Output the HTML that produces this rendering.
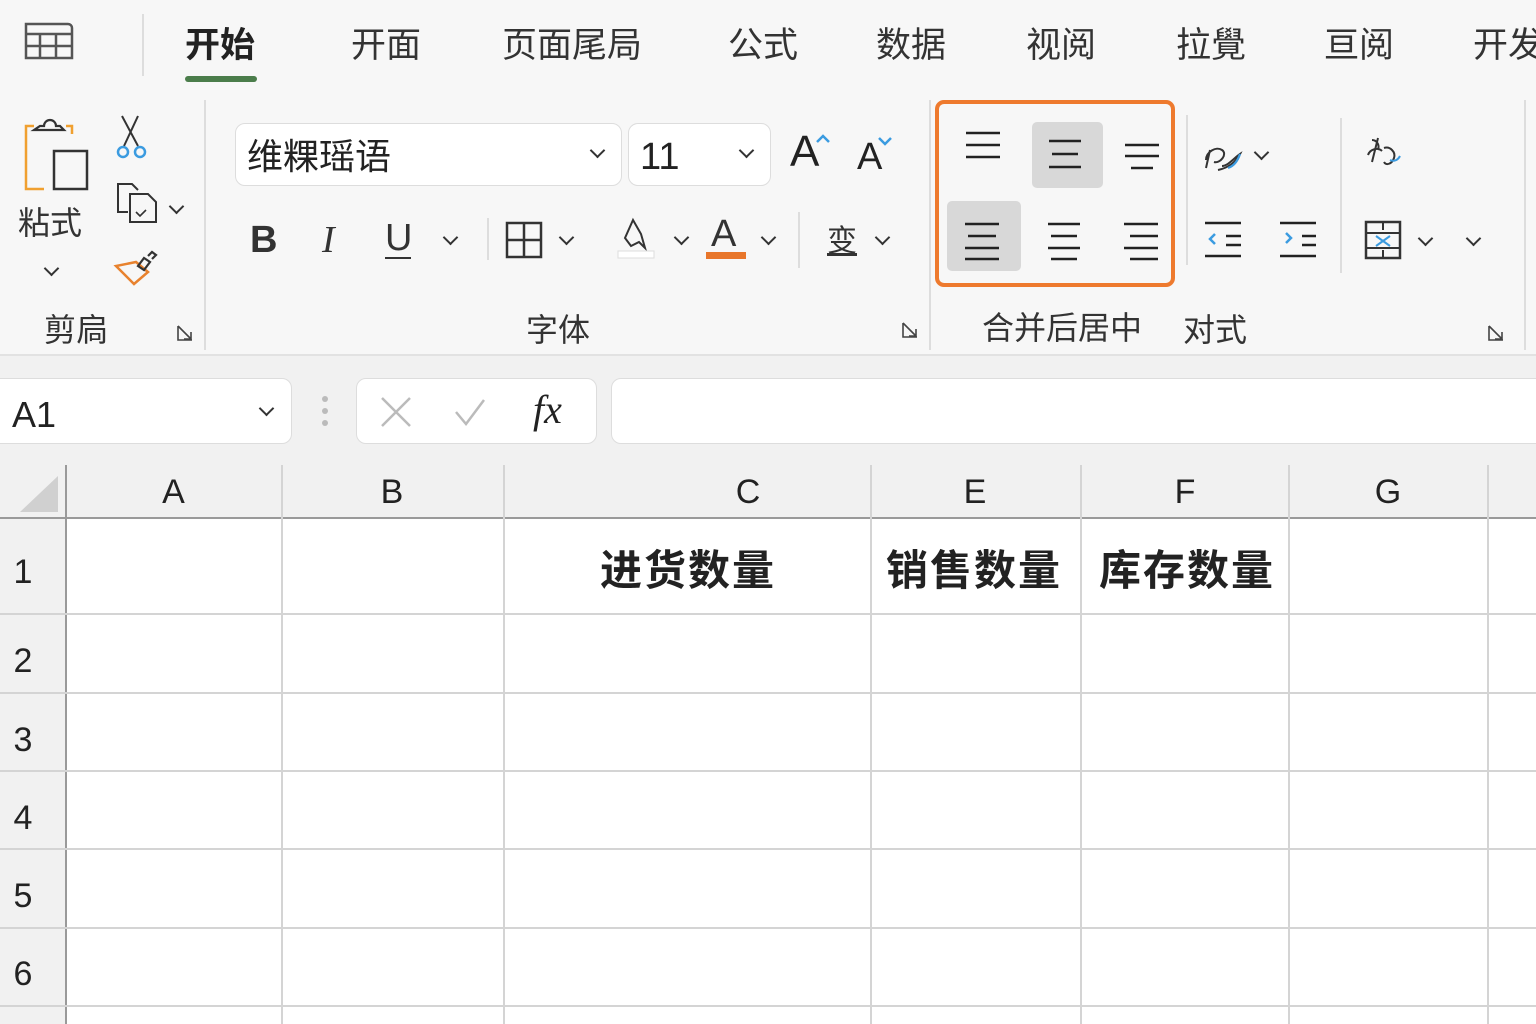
<!DOCTYPE html>
<html><head><meta charset="utf-8">
<style>
*{margin:0;padding:0;box-sizing:border-box}
body{width:1536px;height:1024px;overflow:hidden;background:#f7f7f7;position:relative;font-family:"Liberation Sans","Noto Sans CJK SC",sans-serif;color:#222}
.a{position:absolute}
.t{position:absolute;font-size:35px;line-height:40px;color:#333;white-space:nowrap}
.lbl{position:absolute;font-size:32px;line-height:36px;color:#333;white-space:nowrap}
.box{position:absolute;background:#fff;border:1.5px solid #ddd;border-radius:10px}
.chev{position:absolute;width:11px;height:11px;border-right:2px solid #333;border-bottom:2px solid #333;transform:rotate(45deg)}
.vl{position:absolute;width:1.5px;background:#ddd}
svg{position:absolute;overflow:visible}
.gh{position:absolute;font-size:34px;color:#222;text-align:center;line-height:40px}
</style></head><body>
<!-- tabs -->
<svg style="left:24px;top:20px" width="50" height="46"><path d="M2 4h42a4 4 0 0 1 4 4v30H2z" fill="none" stroke="#555" stroke-width="2.5"/><path d="M2 14h46M2 26h46M16 14v24M32 14v24" stroke="#555" stroke-width="2.5"/></svg>
<div class="vl" style="left:142px;top:14px;height:62px"></div>
<div class="t" style="left:185px;top:26px;font-weight:bold;color:#222">开始</div>
<div class="a" style="left:185px;top:76px;width:72px;height:6px;border-radius:3px;background:#4b7d4b"></div>
<div class="t" style="left:351px;top:26px">开面</div>
<div class="t" style="left:502px;top:26px">页面尾局</div>
<div class="t" style="left:728px;top:26px">公式</div>
<div class="t" style="left:876px;top:26px">数据</div>
<div class="t" style="left:1026px;top:26px">视阅</div>
<div class="t" style="left:1176px;top:26px">拉覺</div>
<div class="t" style="left:1324px;top:26px">亘阅</div>
<div class="t" style="left:1473px;top:26px">开发</div>

<!-- clipboard -->
<svg style="left:24px;top:118px" width="66" height="74"><path d="M10 8H2v63h18" fill="none" stroke="#f0a030" stroke-width="2.5"/><path d="M42 8h6v8" fill="none" stroke="#f0a030" stroke-width="2.5"/><path d="M10 12h30l-4-4h-4a6 6 0 0 0-12 0h-4z" fill="none" stroke="#333" stroke-width="2.2"/><rect x="30" y="33" width="33" height="38" fill="none" stroke="#333" stroke-width="2.5"/></svg>
<div class="lbl" style="left:18px;top:205px">粘式</div>
<div class="chev" style="left:46px;top:263px"></div>
<svg style="left:116px;top:114px" width="40" height="48"><path d="M6 2l16 30M22 2L8 32" stroke="#333" stroke-width="2"/><circle cx="7" cy="38" r="5" fill="none" stroke="#3b9be0" stroke-width="2.5"/><circle cx="24" cy="38" r="5" fill="none" stroke="#3b9be0" stroke-width="2.5"/></svg>
<svg style="left:116px;top:182px" width="40" height="44"><path d="M12 30H2V2h14l6 6" fill="none" stroke="#333" stroke-width="2"/><path d="M14 12h18l8 8v20H14z" fill="none" stroke="#333" stroke-width="2"/><path d="M20 30l4 4 6-6" fill="none" stroke="#333" stroke-width="1.6"/></svg>
<div class="chev" style="left:171px;top:201px"></div>
<svg style="left:114px;top:250px" width="44" height="38"><path d="M2 16l18 18 14-12-12-10z" fill="none" stroke="#e8822e" stroke-width="2.5"/><path d="M24 16l6-8 6 4-6 8zM34 6l4-4 4 3-4 4" fill="none" stroke="#333" stroke-width="2.2"/></svg>
<div class="lbl" style="left:44px;top:312px">剪扃</div>
<svg style="left:177px;top:325px" width="16" height="16"><path d="M1 1v14h14M1 1l13 13M14 7v7H7" fill="none" stroke="#444" stroke-width="1.6"/></svg>
<div class="vl" style="left:204px;top:100px;height:250px"></div>

<!-- font group -->
<div class="box" style="left:235px;top:123px;width:387px;height:63px"></div>
<div class="t" style="left:247px;top:137px;font-size:36px;color:#222">维粿瑶语</div>
<div class="chev" style="left:592px;top:145px"></div>
<div class="box" style="left:628px;top:123px;width:143px;height:63px"></div>
<div class="t" style="left:640px;top:137px;font-size:38px;color:#222">11</div>
<div class="chev" style="left:741px;top:145px"></div>
<div class="t" style="left:790px;top:132px;font-size:44px;color:#222">A</div>
<svg style="left:816px;top:134px" width="14" height="10"><path d="M1 8l6-6 6 6" fill="none" stroke="#3b9be0" stroke-width="2.5"/></svg>
<div class="t" style="left:857px;top:137px;font-size:38px;color:#222">A</div>
<svg style="left:878px;top:136px" width="14" height="10"><path d="M1 2l6 6 6-6" fill="none" stroke="#3b9be0" stroke-width="2.5"/></svg>

<div class="t" style="left:250px;top:220px;font-size:38px;font-weight:bold;color:#333">B</div>
<div class="t" style="left:322px;top:220px;font-size:38px;font-style:italic;font-family:'Liberation Serif',serif;color:#333">I</div>
<div class="t" style="left:385px;top:218px;font-size:38px;color:#333">U</div>
<div class="a" style="left:385px;top:257px;width:26px;height:2px;background:#333"></div>
<div class="chev" style="left:445px;top:232px"></div>
<div class="vl" style="left:487px;top:218px;height:42px"></div>
<svg style="left:506px;top:222px" width="36" height="36"><rect x="1" y="1" width="34" height="34" fill="none" stroke="#333" stroke-width="2.5"/><path d="M18 1v34M1 18h34" stroke="#333" stroke-width="2.5"/></svg>
<div class="chev" style="left:561px;top:232px"></div>
<svg style="left:617px;top:218px" width="40" height="42"><path d="M16 2l-8 18 6 8 8-4 6 6-4-14z" fill="none" stroke="#333" stroke-width="2"/><rect x="1" y="33" width="36" height="7" fill="#fff" stroke="#ddd"/></svg>
<div class="chev" style="left:676px;top:232px"></div>
<div class="t" style="left:711px;top:214px;font-size:38px;color:#333">A</div>
<div class="a" style="left:706px;top:252px;width:40px;height:7px;background:#e8762b"></div>
<div class="chev" style="left:763px;top:232px"></div>
<div class="vl" style="left:798px;top:212px;height:56px"></div>
<div class="t" style="left:827px;top:222px;font-size:30px;color:#333;text-decoration:underline">变</div>
<div class="chev" style="left:877px;top:232px"></div>
<div class="lbl" style="left:526px;top:312px">字体</div>
<svg style="left:902px;top:322px" width="16" height="16"><path d="M1 1v14h14M1 1l13 13M14 7v7H7" fill="none" stroke="#444" stroke-width="1.6"/></svg>
<div class="vl" style="left:929px;top:100px;height:250px"></div>

<!-- alignment -->
<div class="a" style="left:1032px;top:122px;width:71px;height:66px;background:#d8d8d8;border-radius:5px"></div>
<div class="a" style="left:947px;top:201px;width:74px;height:70px;background:#d8d8d8;border-radius:5px"></div>
<div class="a" style="left:935px;top:100px;width:240px;height:187px;border:4px solid #ee7a2e;border-radius:9px"></div>
<svg style="left:0;top:0" width="1536" height="400"><g stroke="#222" stroke-width="2.5">
<path d="M966 133h34M966 145h34M966 157h34"/>
<path d="M1049 141h32M1052 154h26M1049 167h32"/>
<path d="M1125 145h34M1125 156h34M1131 168h22"/>
<path d="M965 224h34M968 236h28M965 248h34M965 259h34"/>
<path d="M1048 224h32M1051 236h26M1048 248h32M1051 259h26"/>
<path d="M1124 224h34M1130 236h28M1124 248h34M1130 259h28"/>
<path d="M1205 223h36M1226 236h15M1226 245h15M1205 256h36"/>
<path d="M1280 223h36M1302 236h14M1302 245h14M1280 256h36"/>
</g>
<path d="M1215 234l-5 5 5 5" fill="none" stroke="#3b9be0" stroke-width="2.5"/>
<path d="M1286 233l5 5-5 5" fill="none" stroke="#3b9be0" stroke-width="2.5"/>
<path d="M1206 160c0-8 10-14 16-10s-2 14-8 12M1210 150l-4 18M1222 166c6 0 12-8 18-12-4 8-12 14-22 16" fill="none" stroke="#333" stroke-width="2"/>
<path d="M1228 168c6-2 10-8 12-14" fill="none" stroke="#3b9be0" stroke-width="2.2"/>
<path d="M1372 140c4 0 8 4 6 10M1368 155c2-6 10-8 14-4M1378 138l-6 24M1384 148c6-2 12 4 10 10s-8 8-10 4" fill="none" stroke="#333" stroke-width="2"/>
<path d="M1390 160c4 2 8 0 10-4" fill="none" stroke="#3b9be0" stroke-width="2"/>
<rect x="1366" y="222" width="34" height="36" fill="none" stroke="#333" stroke-width="2.5"/>
<path d="M1366 233h34M1366 248h34M1383 222v8M1383 250v8" stroke="#333" stroke-width="2"/>
<path d="M1376 236l14 10M1390 236l-14 10" stroke="#3b9be0" stroke-width="2"/>
</svg>
<div class="chev" style="left:1256px;top:147px"></div>
<div class="vl" style="left:1186px;top:115px;height:150px"></div>
<div class="vl" style="left:1340px;top:118px;height:155px"></div>
<div class="chev" style="left:1420px;top:233px"></div>
<div class="chev" style="left:1468px;top:233px"></div>
<div class="lbl" style="left:982px;top:310px">合并后居中</div>
<div class="lbl" style="left:1183px;top:312px">对式</div>
<svg style="left:1488px;top:325px" width="16" height="16"><path d="M1 1v14h14M1 1l13 13M14 7v7H7" fill="none" stroke="#444" stroke-width="1.6"/></svg>
<div class="vl" style="left:1524px;top:100px;height:250px"></div>

<!-- ribbon bottom -->
<div class="a" style="left:0;top:354px;width:1536px;height:112px;background:#f1f1f1;border-top:2px solid #e2e2e2"></div>

<!-- formula bar -->
<div class="box" style="left:-10px;top:378px;width:302px;height:66px"></div>
<div class="t" style="left:12px;top:395px;font-size:36px;color:#222">A1</div>
<div class="chev" style="left:261px;top:403px"></div>
<div class="a" style="left:322px;top:396px;width:6px;height:6px;border-radius:3px;background:#bbb"></div>
<div class="a" style="left:322px;top:408px;width:6px;height:6px;border-radius:3px;background:#bbb"></div>
<div class="a" style="left:322px;top:420px;width:6px;height:6px;border-radius:3px;background:#bbb"></div>
<div class="box" style="left:356px;top:378px;width:241px;height:66px"></div>
<svg style="left:380px;top:396px" width="120" height="32"><path d="M2 2l28 28M30 2L2 30" stroke="#bbb" stroke-width="2.5"/><path d="M76 16l10 12 18-24" fill="none" stroke="#bbb" stroke-width="2.5"/></svg>
<div class="t" style="left:533px;top:390px;font-size:40px;font-style:italic;font-family:'Liberation Serif',serif;color:#222">fx</div>
<div class="box" style="left:611px;top:378px;width:940px;height:66px"></div>

<!-- grid -->
<div class="a" style="left:0;top:465px;width:1536px;height:559px;background:#fff"></div>
<div class="a" style="left:0;top:465px;width:1536px;height:53px;background:#f1f1f1"></div>
<div class="a" style="left:0;top:465px;width:66px;height:559px;background:#f1f1f1"></div>
<svg style="left:20px;top:476px" width="40" height="38"><path d="M38 0v36H0z" fill="#d0d0d0"/></svg>
<div class="a" style="left:0;top:517px;width:1536px;height:2px;background:#9a9a9a"></div>
<div class="a" style="left:65px;top:465px;width:2px;height:559px;background:#9a9a9a"></div>
<!-- column lines -->
<div class="vl" style="left:281px;top:465px;height:559px;background:#d4d4d4"></div>
<div class="vl" style="left:503px;top:465px;height:559px;background:#d4d4d4"></div>
<div class="vl" style="left:870px;top:465px;height:559px;background:#d4d4d4"></div>
<div class="vl" style="left:1080px;top:465px;height:559px;background:#d4d4d4"></div>
<div class="vl" style="left:1288px;top:465px;height:559px;background:#d4d4d4"></div>
<div class="vl" style="left:1487px;top:465px;height:559px;background:#d4d4d4"></div>
<!-- row lines -->
<div class="a" style="left:0;top:613px;width:1536px;height:1.5px;background:#d4d4d4"></div>
<div class="a" style="left:0;top:692px;width:1536px;height:1.5px;background:#d4d4d4"></div>
<div class="a" style="left:0;top:770px;width:1536px;height:1.5px;background:#d4d4d4"></div>
<div class="a" style="left:0;top:848px;width:1536px;height:1.5px;background:#d4d4d4"></div>
<div class="a" style="left:0;top:927px;width:1536px;height:1.5px;background:#d4d4d4"></div>
<div class="a" style="left:0;top:1005px;width:1536px;height:1.5px;background:#d4d4d4"></div>
<!-- headers -->
<div class="gh" style="left:66px;top:472px;width:215px">A</div>
<div class="gh" style="left:281px;top:472px;width:222px">B</div>
<div class="gh" style="left:503px;top:472px;width:490px">C</div>
<div class="gh" style="left:870px;top:472px;width:210px">E</div>
<div class="gh" style="left:1080px;top:472px;width:210px">F</div>
<div class="gh" style="left:1288px;top:472px;width:200px">G</div>
<div class="gh" style="left:0;top:552px;width:46px">1</div>
<div class="gh" style="left:0;top:641px;width:46px">2</div>
<div class="gh" style="left:0;top:720px;width:46px">3</div>
<div class="gh" style="left:0;top:798px;width:46px">4</div>
<div class="gh" style="left:0;top:876px;width:46px">5</div>
<div class="gh" style="left:0;top:954px;width:46px">6</div>
<div class="t" style="left:600px;top:546px;font-size:42px;line-height:50px;font-weight:bold;color:#222;letter-spacing:2px">进货数量</div>
<div class="t" style="left:886px;top:546px;font-size:42px;line-height:50px;font-weight:bold;color:#222;letter-spacing:2px">销售数量</div>
<div class="t" style="left:1099px;top:546px;font-size:42px;line-height:50px;font-weight:bold;color:#222;letter-spacing:2px">库存数量</div>
</body></html>
